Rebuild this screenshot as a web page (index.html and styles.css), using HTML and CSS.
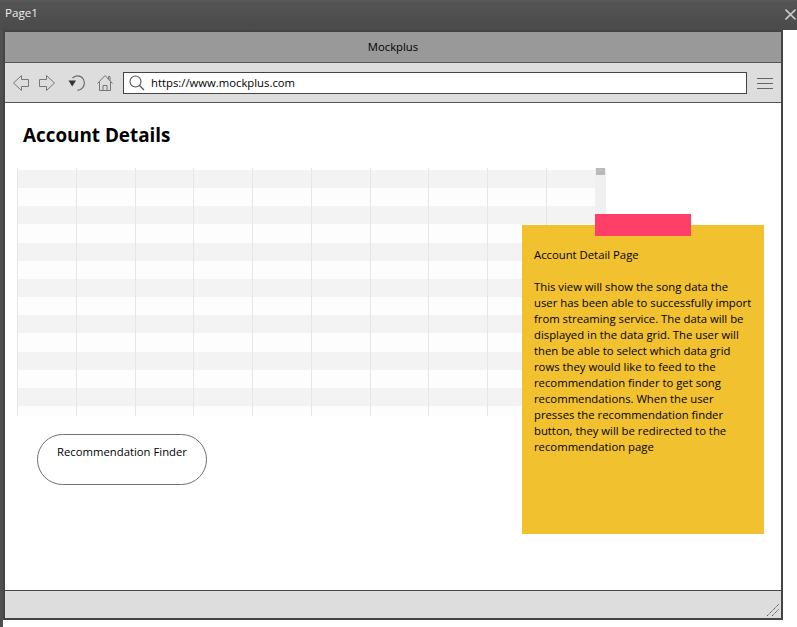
FILE: index.html
```html
<!doctype html>
<html>
<head>
<meta charset="utf-8">
<link rel="stylesheet" href="styles.css">
<title>Page1</title>
</head>
<body>
<div class="titlebar">
    <span class="page-name">Page1</span>
    <svg class="close" width="11" height="11" viewBox="0 0 11 11"><path d="M0.5 0.5L10.5 10.5M10.5 0.5L0.5 10.5" fill="none" stroke="#c8c8c8" stroke-width="1.6"/></svg>
</div>
<div class="stage">
    <div class="window">
        <div class="win-title">Mockplus</div>
        <div class="toolbar">
            <svg class="tool" width="16" height="16" viewBox="0 0 16 16"><path d="M0.5 8L8.5 0.5V4.5H15.5V11.5H8.5V15.5Z" fill="none" stroke="#777"/></svg>
            <svg class="tool tool-next" width="16" height="16" viewBox="0 0 16 16"><path d="M15.5 8L7.5 0.5V4.5H0.5V11.5H7.5V15.5Z" fill="none" stroke="#777"/></svg>
            <svg class="tool tool-reload" width="18" height="16" viewBox="0 0 18 16"><path d="M4.5 3C7.5 0.2 11.5 0.2 14 2.5C17 5.2 17.2 9.8 14.5 12.8C13 14.5 11.5 15.3 9.5 15.4" fill="none" stroke="#666" stroke-width="1.1"/><path d="M0.5 5.5H8L4.2 11.5Z" fill="#333"/></svg>
            <svg class="tool" width="16" height="16" viewBox="0 0 16 16"><path d="M0.5 8.5L8 0.5L15.5 8.5M2.5 6.5V15.5H13.5V6.5M6 15.5V10.5H10V15.5M11.5 4.2V1.5H13V5.8" fill="none" stroke="#777"/></svg>
            <div class="urlbar">
                <svg width="16" height="16" viewBox="0 0 16 16"><circle cx="6.5" cy="6.5" r="5.5" fill="none" stroke="#555" stroke-width="1.1"/><path d="M10.5 10.5L15 15" stroke="#555" stroke-width="1.2"/></svg>
                <span>https://www.mockplus.com</span>
            </div>
            <div class="menu"><i></i><i></i><i></i></div>
        </div>
        <div class="content">
            <h1>Account Details</h1>
            <div class="grid">
                <div class="rows">
                    <div class="row row-top"></div>
                    <div class="row row-grey"></div>
                    <div class="row"></div>
                    <div class="row row-grey"></div>
                    <div class="row"></div>
                    <div class="row row-grey"></div>
                    <div class="row"></div>
                    <div class="row row-grey"></div>
                    <div class="row"></div>
                    <div class="row row-grey"></div>
                    <div class="row"></div>
                    <div class="row row-grey"></div>
                    <div class="row"></div>
                    <div class="row row-grey"></div>
                    <div class="row row-end"></div>
                </div>
                <div class="scrollbar"><div class="thumb"></div></div>
            </div>
            <button class="finder">Recommendation Finder</button>
            <div class="note">
                <div class="tape"></div>
                <p>Account Detail Page</p>
                <p>This view will show the song data the<br>user has been able to successfully import<br>from streaming service. The data will be<br>displayed in the data grid. The user will<br>then be able to select which data grid<br>rows they would like to feed to the<br>recommendation finder to get song<br>recommendations. When the user<br>presses the recommendation finder<br>button, they will be redirected to the<br>recommendation page</p>
            </div>
        </div>
        <div class="statusbar">
            <svg width="12" height="12" viewBox="0 0 12 12"><path d="M0 12L12 0M5 12L12 5" fill="none" stroke="#555" stroke-dasharray="1.4 0.6"/></svg>
        </div>
    </div>
</div>
</body>
</html>
```

FILE: styles.css
```css
* {
    box-sizing: border-box;
}
html,
body {
    margin: 0;
    height: 627px;
    overflow: hidden;
    background-color: white;
}
body {
    font-family: "Open Sans", "Noto Sans", sans-serif;
    font-size: 11.3px;
    color: black;
}
.titlebar {
    display: flex;
    justify-content: space-between;
    align-items: flex-start;
    height: 30px;
    padding: 5px 1px 0 5px;
    color: #eee;
    background: linear-gradient(#5c5c5c 0, #545454 2px, #4a4a4a 100%);
}
.page-name {
    font-size: 11.6px;
}
.close {
    margin-top: 4px;
}
.stage {
    height: 597px;
    border-left: 3px solid #4f4f4f;
}
.window {
    display: flex;
    flex-direction: column;
    width: 780px;
    height: 590px;
    border: 2px solid #444;
}
.win-title {
    height: 31px;
    line-height: 30px;
    text-align: center;
    background-color: #999;
    border-bottom: 1px solid #555;
}
.toolbar {
    display: flex;
    align-items: center;
    height: 40px;
    padding: 1px 8px 0;
    background-color: #ddd;
    border-bottom: 1px solid #555;
}
.tool {
    margin-right: 10px;
    flex: none;
}
.tool-next {
    margin-right: 13px;
}
.tool-reload {
    margin-right: 11px;
}
.urlbar {
    display: flex;
    align-items: center;
    gap: 6px;
    flex: 1;
    height: 22px;
    padding: 0 5px;
    background-color: white;
    border: 1px solid #444;
}
.urlbar span {
    margin-top: -2px;
}
.menu {
    display: flex;
    flex-direction: column;
    gap: 4px;
    width: 16px;
    margin-left: 10px;
}
.menu i {
    display: block;
    height: 1px;
    background-color: #666;
}
.content {
    position: relative;
    flex: 1;
    padding: 0 12px;
    background-color: white;
}
h1 {
    margin: 0 0 19px 6px;
    padding-top: 18px;
    font-size: 18.85px;
    line-height: 28px;
    font-weight: 700;
}
.grid {
    display: flex;
    width: 589px;
    height: 249px;
}
.rows {
    width: 578px;
}
.row {
    height: 18.17px;
    background: repeating-linear-gradient(to right, #e6e6e6 0, #e6e6e6 1px, transparent 1px, transparent 58.78px);
    background-color: #fdfdfd;
}
.row-top {
    height: 2px;
    background-color: white;
}
.row-grey {
    background-color: #f3f3f3;
}
.row-end {
    height: 10px;
}
.scrollbar {
    width: 11px;
    padding: 0 1px;
    background-color: #f0f0f0;
}
.thumb {
    height: 7px;
    background-color: #bbb;
}
.finder {
    display: flex;
    justify-content: center;
    align-items: flex-start;
    width: 170px;
    height: 51px;
    margin: 17px 0 0 20px;
    padding: 9px 0 0;
    font: inherit;
    line-height: 16px;
    background-color: white;
    border: 1px solid #707070;
    border-radius: 26px;
}
.note {
    position: absolute;
    left: 517px;
    top: 122px;
    width: 242px;
    height: 309px;
    padding: 22px 12px 0;
    line-height: 16px;
    background-color: #f2c130;
}
.note p {
    margin: 0 0 16px;
}
.tape {
    position: absolute;
    left: 73px;
    top: -11px;
    width: 96px;
    height: 22px;
    background-color: #ff3f67;
}
.statusbar {
    display: flex;
    justify-content: flex-end;
    align-items: flex-end;
    height: 28px;
    padding: 0 2px 2px 0;
    background-color: #ddd;
    border-top: 1px solid #444;
}
```
